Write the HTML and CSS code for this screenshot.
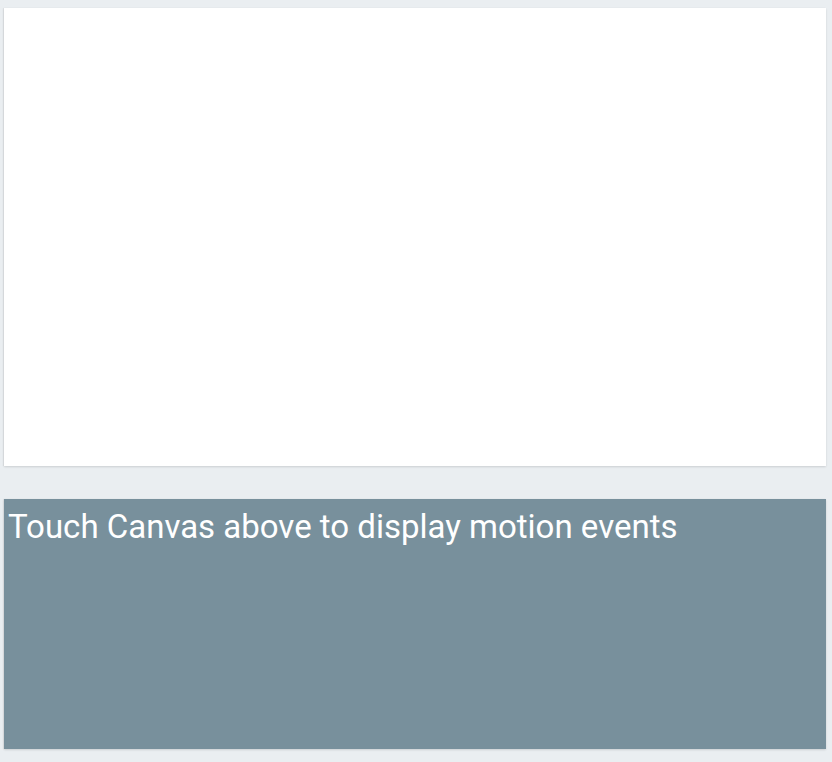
FILE: index.html
```html
<!DOCTYPE html>
<html>
<head>
<meta charset="utf-8">
<link rel="stylesheet" href="styles.css">
</head>
<body>
<div class="page">
  <div class="canvas"></div>
  <div class="log">Touch Canvas above to display motion events</div>
</div>
</body>
</html>
```
FILE: styles.css
```css
html, body {
  margin: 0;
  padding: 0;
  background: #eaeef1;
  height: 762px;
  overflow: hidden;
}
.page {
  display: flex;
  flex-direction: column;
  gap: 33px;
  padding: 8px 6px 0 4px;
}
.canvas {
  height: 458px;
  background: #ffffff;
  box-shadow: 0 1px 2px rgba(0,0,0,0.12), -1px 0 1px rgba(0,0,0,0.05);
}
.log {
  height: 250px;
  background: #78909c;
  color: #ffffff;
  font-family: Roboto, "Liberation Sans", sans-serif;
  font-size: 33px;
  line-height: 56px;
  padding: 0 4px;
  box-sizing: border-box;
  box-shadow: 0 1px 2px rgba(0,0,0,0.12), -1px 0 1px rgba(0,0,0,0.05);
}
```
